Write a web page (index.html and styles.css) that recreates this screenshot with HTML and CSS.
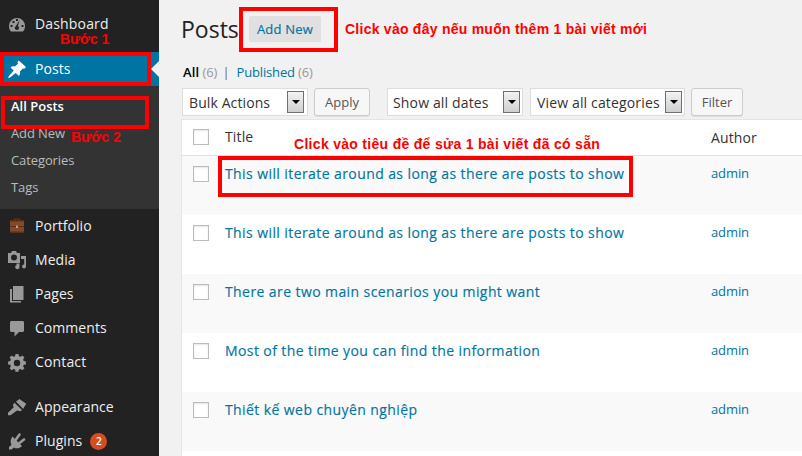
FILE: index.html
```html
<!DOCTYPE html>
<html lang="vi">
<head>
<meta charset="utf-8">
<title>Posts</title>
<link rel="stylesheet" href="styles.css">
</head>
<body>
<div class="app">
<nav class="sidebar">
  <a class="item"><svg class="icon" viewBox="0 0 20 20"><path fill-rule="evenodd" d="M4 17.500C2.500 16 2 14 2 12a8 8 0 0 1 16 0c0 2-.5 4-2 5.500zM9 5h2v2H9zM5.500 7h2v2h-2zM3.500 11h2v2h-2zM14.500 11h2v2h-2zM12.600 6L11 12c1.500 1 1.500 4-1 4s-2.800-3-1-4z"/></svg><span class="label t-dash">Dashboard</span></a>
  <a class="item current"><svg class="icon" viewBox="0 0 20 20"><path d="M10.400 3l1.400-1.500 7.200 6.600-1.500 1.600-1.600-.3-3 3.200c.5 1.600.1 3.200-1 4.400l-3.200-3.100L3 18.600l-1.800.6.600-1.900 4.900-5.700-3.200-3.100c1.200-1.100 2.800-1.400 4.400-.9l3.100-2.900z"/></svg><span class="label">Posts</span></a>
  <div class="submenu">
    <a class="sub active">All Posts</a>
    <a class="sub">Add New</a>
    <a class="sub">Categories</a>
    <a class="sub">Tags</a>
  </div>
  <a class="item"><svg class="icon" viewBox="0 0 20 20"><path d="M7.500 5V3h5v2" fill="none" stroke="#5a2e18" stroke-width="1.500"/><rect x="3" y="4.500" width="14" height="12" fill="#824a2a"/><path d="M3 4.500h14v1H3zM3 10h14v1H3zM3 15.500h14v1H3z" fill="#5a2e18"/><rect x="9" y="9.500" width="2" height="2.500" fill="#b8a48c"/></svg><span class="label">Portfolio</span></a>
  <a class="item"><svg class="icon" viewBox="0 0 20 20"><path fill-rule="evenodd" d="M1 3h3l1-2h4l1 2h3v10H1zM7 4.500a3 3 0 1 0 0 6 3 3 0 0 0 0-6z"/><path d="M14 6h5v10.500a2 2 0 1 1-1.800-2V9H14zM9.500 13.500h3v3a2.200 2.200 0 1 1-3-1.500z"/></svg><span class="label">Media</span></a>
  <a class="item"><svg class="icon" viewBox="0 0 20 20"><path d="M6 2h10.500v14H6zM3 5h2v12h9v1.500H3z"/></svg><span class="label">Pages</span></a>
  <a class="item"><svg class="icon" viewBox="0 0 20 20"><path d="M4 3h12l1 1v9l-1 1h-4l-4.500 4.500V14H4l-1-1V4z"/></svg><span class="label">Comments</span></a>
  <a class="item"><svg class="icon" viewBox="0 0 20 20"><path fill-rule="evenodd" d="M8.500 2h3l.4 2.200 1.500.6 1.900-1.300 2.100 2.100-1.300 1.900.6 1.500 2.200.4v3l-2.200.4-.6 1.500 1.300 1.900-2.100 2.100-1.900-1.300-1.500.6-.4 2.200h-3l-.4-2.200-1.500-.6-1.900 1.300-2.100-2.100 1.300-1.900-.6-1.500-2.200-.4v-3l2.200-.4.600-1.500-1.300-1.900 2.100-2.100 1.900 1.300 1.500-.6zM10 7.800a3.200 3.200 0 1 0 0 6.400 3.200 3.200 0 0 0 0-6.400z"/></svg><span class="label t-contact">Contact</span></a>
  <a class="item spaced"><svg class="icon" viewBox="0 0 20 20"><path d="M9 4.500L12.500 2l2 1.500 4.800 3.200L16 12z"/><path d="M7.500 5.800l7.500 7.200-1.500 1.200-3.500-.7-6.500 4.800H1v-2.500l5.700-5.500-.8-2.500z"/><path d="M7.800 4.800l8 7.400" stroke="#222" stroke-width=".9"/></svg><span class="label">Appearance</span></a>
  <a class="item"><svg class="icon" viewBox="0 0 20 20"><path d="M5.500 5.500l9.500 9.500c-2.200 2.500-5.600 3-8 1.500L4.500 18.500H2V16l2.500-2.300C3 11.500 3.500 8 5.500 5.500z"/><path d="M9 8.500l3.500-5M12.500 12l4.500-3.500" stroke="#999" stroke-width="2.600" stroke-linecap="round"/></svg><span class="label">Plugins</span><span class="badge">2</span></a>
  <div class="mark mark-posts"></div>
  <div class="mark mark-all"></div>
  <span class="note note-1">Bước 1</span>
  <span class="note note-2">Bước 2</span>
</nav>
<main class="content">
  <header class="head"><h1>Posts</h1><a class="add">Add New</a><span class="tip">Click vào đây nếu muốn thêm 1 bài viết mới</span></header>
  <div class="filters"><b>All</b><i>(6)</i><em>|</em><a>Published</a><i>(6)</i></div>
  <div class="toolbar">
    <div class="select s1"><span>Bulk Actions</span><span class="arrow"></span></div>
    <div class="button b1">Apply</div>
    <div class="select s2"><span>Show all dates</span><span class="arrow"></span></div>
    <div class="select s3"><span>View all categories</span><span class="arrow"></span></div>
    <div class="button b2">Filter</div>
  </div>
  <section class="table">
    <div class="row thead"><span class="check"></span><span class="title">Title</span><span class="author">Author</span></div>
    <div class="row odd"><span class="check"></span><a class="title">This will iterate around as long as there are posts to show</a><a class="author">admin</a></div>
    <div class="row"><span class="check"></span><a class="title">This will iterate around as long as there are posts to show</a><a class="author">admin</a></div>
    <div class="row odd"><span class="check"></span><a class="title">There are two main scenarios you might want</a><a class="author">admin</a></div>
    <div class="row"><span class="check"></span><a class="title">Most of the time you can find the information</a><a class="author">admin</a></div>
    <div class="row odd"><span class="check"></span><a class="title">Thiết kế web chuyên nghiệp</a><a class="author">admin</a></div>
    <div class="row"></div>
  </section>
</main>
<div class="mark mark-add"></div>
<div class="mark mark-title"></div>
<span class="note note-3">Click vào tiêu đề để sửa 1 bài viết đã có sẵn</span>
</div>
</body>
</html>
```
FILE: styles.css
```css
* { box-sizing: border-box; }
body { margin: 0; background: #f1f1f1; font-family: "Open Sans", sans-serif; font-size: 13px; color: #333; }
.app { position: relative; display: flex; width: 802px; height: 456px; overflow: hidden; }
.sidebar { position: relative; flex: none; width: 159px; height: 456px; padding-top: 7px; background: #222; overflow: hidden; }
.item { display: flex; align-items: center; height: 34px; padding-left: 7px; color: #eee; font-size: 14px; white-space: nowrap; }
.label { padding-bottom: 2px; letter-spacing: .05px; }
.t-dash { letter-spacing: .16px; }
.t-contact { letter-spacing: .15px; }
.icon { width: 20px; height: 20px; margin-right: 8px; fill: #999; flex: none; }
.current { position: relative; margin-top: 11px; background: #0074a2; color: #fff; }
.current .icon { fill: #fff; }
.current::after { content: ""; position: absolute; right: 0; top: 9px; border: 8px solid transparent; border-left: 0; border-right-color: #f1f1f1; }
.submenu { height: 123px; padding: 7px 0 8px 11px; background: #333; }
.sub { display: block; height: 27px; line-height: 27px; font-size: 13px; color: #bbb; letter-spacing: -.1px; }
.sub.active { color: #fff; font-weight: 600; letter-spacing: 0; }
.spaced { margin-top: 11px; }
.badge { width: 17px; height: 17px; margin-left: 8px; border-radius: 50%; background: #d54e21; color: #fff; font-size: 10px; font-weight: 600; line-height: 17px; text-align: center; }
.content { flex: 1; min-width: 0; padding-left: 22px; }
.head { display: flex; align-items: center; height: 58px; }
h1 { margin: 0; width: 68px; font-size: 23px; font-weight: 400; line-height: 56px; color: #222; }
.add { width: 72px; height: 26px; border-radius: 2px; background: #e0e0e0; color: #0074a2; -webkit-text-stroke: .15px #0074a2; letter-spacing: .2px; line-height: 26px; text-align: center; }
.tip, .note { font-family: "Liberation Sans", Arial, sans-serif; font-weight: 700; color: #f00; white-space: nowrap; }
.tip { margin-left: 24px; font-size: 14px; letter-spacing: .25px; }
.filters { display: flex; height: 30px; padding-left: 2px; line-height: 29px; color: #999; letter-spacing: -.05px; }
.filters b { color: #000; font-weight: 600; margin-right: 3px; letter-spacing: .2px; }
.filters i, .filters em { font-style: normal; }
.filters em { margin: 0 7px 0 5px; color: #666; }
.filters a { color: #0074a2; margin-right: 3px; letter-spacing: -.15px; }
.toolbar { display: flex; height: 31px; padding-left: 1px; }
.select { display: flex; align-items: center; justify-content: space-between; height: 28px; padding: 0 2px 0 6px; border: 1px solid #ddd; background: #fff; font-size: 14px; white-space: nowrap; letter-spacing: .15px; }
.arrow { display: flex; align-items: center; justify-content: center; width: 17px; height: 22px; border: 1px solid #707070; background: linear-gradient(#f2f2f2, #cfcfcf); }
.arrow::before { content: ""; border: 4px solid transparent; border-bottom: 0; border-top-color: #000; }
.button { height: 28px; border: 1px solid #ccc; border-radius: 3px; background: #f7f7f7; box-shadow: 0 1px 0 rgba(0,0,0,.08); color: #555; line-height: 27px; text-align: center; }
.s1 { width: 126px; padding-right: 3px; letter-spacing: .1px; } .b1 { width: 56px; margin-left: 6px; }
.s2 { width: 136px; margin-left: 17px; padding-left: 5px; letter-spacing: .15px; } .s3 { width: 155px; margin-left: 7px; } .b2 { width: 52px; margin-left: 6px; }
.table { border-left: 1px solid #e5e5e5; border-top: 1px solid #e5e5e5; background: #fff; }
.row { display: flex; height: 59px; padding: 10px 0 0 11px; }
.row.odd { background: #f9f9f9; }
.check { flex: none; width: 16px; height: 16px; border: 1px solid #bbb; background: #fff; box-shadow: inset 0 1px 2px rgba(0,0,0,.1); }
.title { width: 486px; margin-left: 16px; color: #0074a2; font-size: 14px; -webkit-text-stroke: .15px #0074a2; line-height: 16px; white-space: nowrap; letter-spacing: .41px; }
.author { color: #0074a2; line-height: 15px; letter-spacing: -.1px; }
.thead { height: 36px; padding-top: 9px; border-bottom: 1px solid #e1e1e1; }
.thead .title, .thead .author { color: #333; font-size: 14px; font-weight: 400; -webkit-text-stroke: 0; letter-spacing: .15px; }
.thead .author { line-height: 18px; letter-spacing: .1px; }
.mark, .note { position: absolute; }
.mark { border: 4px solid #f00; }
.mark-posts { left: 0; top: 52px; width: 151px; height: 34px; }
.mark-all { left: 1px; top: 96px; width: 148px; height: 33px; }
.mark-add { left: 239px; top: 7px; width: 99px; height: 45px; }
.mark-title { left: 218px; top: 156px; width: 415px; height: 41px; }
.note-1 { left: 60px; top: 31px; font-size: 14px; line-height: 16px; letter-spacing: -.1px; }
.note-2 { left: 71px; top: 129px; font-size: 14px; line-height: 16px; }
.note-3 { left: 294px; top: 136px; font-size: 14px; line-height: 16px; letter-spacing: .3px; }
```
